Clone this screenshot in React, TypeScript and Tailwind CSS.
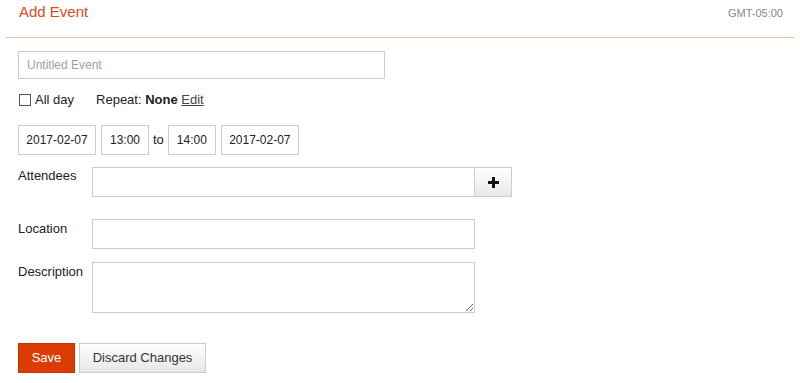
import React from 'react';

export default function App() {
  return (
    <div className="w-[800px] h-[383px] bg-white text-[#222] font-[family-name:Liberation_Sans,Arial,sans-serif] overflow-hidden">
      {/* Header */}
      <div className="mx-[6px] h-[38px] flex items-start justify-between border-b border-[#f0b8a4]">
        <h1 className="pl-[13px] pt-[3px] text-[15px] leading-[18px] text-[#dd4a22]">Add Event</h1>
        <span className="pr-[11px] pt-[5px] text-[11px] text-[#888]">GMT-05:00</span>
      </div>

      <div className="px-[18px]">
        <input
          type="text"
          placeholder="Untitled Event"
          className="mt-[13px] block w-[367px] h-[28px] border border-[#ccc] px-[8px] text-[12px] placeholder:text-[#a0a0a0] outline-none"
        />

        {/* All day / repeat */}
        <div className="mt-[13px] flex items-center h-[16px] text-[13px]">
          <span className="w-[12px] h-[12px] border border-[#555] mr-[4px] ml-[1px]" />
          <span>All day</span>
          <span className="ml-[22px]">Repeat: <b>None</b> <span className="underline text-[#444]">Edit</span></span>
        </div>

        {/* Dates */}
        <div className="mt-[17px] flex items-center text-[12px]">
          <div className="w-[78px] h-[30px] border border-[#ccc] flex items-center justify-center">2017-02-07</div>
          <div className="ml-[5px] w-[48px] h-[30px] border border-[#ccc] flex items-center justify-center">13:00</div>
          <span className="mx-[4px] text-[13px]">to</span>
          <div className="w-[48px] h-[30px] border border-[#ccc] flex items-center justify-center">14:00</div>
          <div className="ml-[5px] w-[78px] h-[30px] border border-[#ccc] flex items-center justify-center">2017-02-07</div>
        </div>

        {/* Attendees */}
        <div className="mt-[12px] flex items-start text-[13px]">
          <label className="w-[74px] -mt-[1px]">Attendees</label>
          <div className="flex">
            <input type="text" className="w-[383px] h-[30px] border border-[#ccc] outline-none" />
            <button className="w-[37px] h-[30px] border border-l-0 border-[#ccc] bg-gradient-to-b from-white to-[#e8e8e8] flex items-center justify-center">
              <svg width="11" height="11" viewBox="0 0 11 11">
                <path d="M4 0h3v4h4v3H7v4H4V7H0V4h4z" fill="#111" />
              </svg>
            </button>
          </div>
        </div>

        {/* Location */}
        <div className="mt-[22px] flex items-start text-[13px]">
          <label className="w-[74px]">Location</label>
          <input type="text" className="w-[383px] h-[30px] border border-[#ccc] outline-none" />
        </div>

        {/* Description */}
        <div className="mt-[13px] flex items-start text-[13px]">
          <label className="w-[74px]">Description</label>
          <textarea className="w-[383px] h-[51px] border border-[#ccc] outline-none resize-y" />
        </div>

        {/* Buttons */}
        <div className="mt-[30px] flex gap-[4px] text-[13px]">
          <button className="w-[57px] h-[30px] bg-[#dc3c02] text-white border border-[#c83400]">Save</button>
          <button className="w-[127px] h-[30px] border border-[#ccc] text-[#333] bg-gradient-to-b from-white to-[#e6e6e6]">Discard Changes</button>
        </div>
      </div>
    </div>
  );
}
